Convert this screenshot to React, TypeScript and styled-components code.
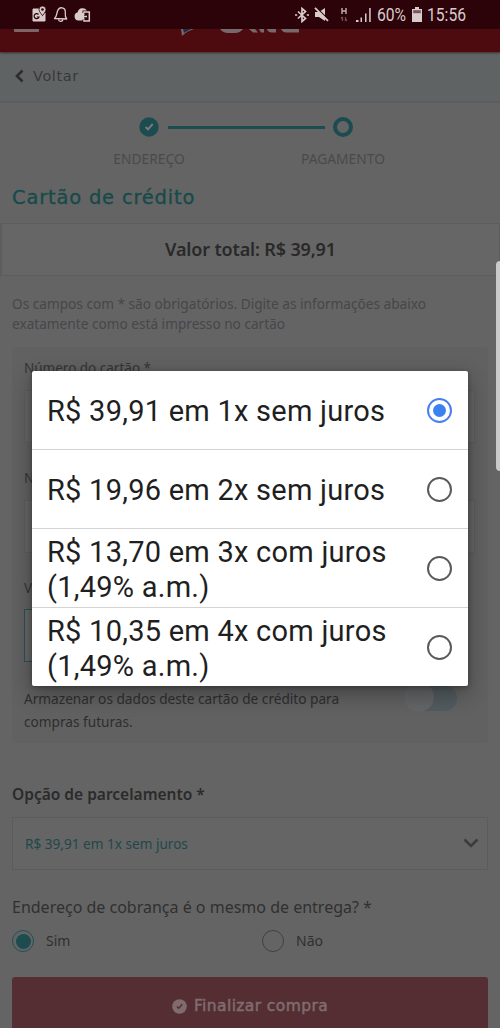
import React from 'react';
import styled, { createGlobalStyle, css } from 'styled-components';

const Global = createGlobalStyle`
  * { box-sizing: border-box; }
  body { margin: 0; background: #646464; font-family: 'Noto Sans', 'Open Sans', sans-serif; }
`;

const Screen = styled.div`
  position: relative; width: 500px; height: 1028px; overflow: hidden;
  background: #646464; display: flex; flex-direction: column;
`;
const StatusBar = styled.div`
  height: 29px; flex: none; background: #2c0308; color: #d9cbcc;
  display: flex; align-items: center; justify-content: space-between;
  padding: 0 33px 0 31px; font-family: Roboto, sans-serif;
`;
const StatusGroup = styled.div<{ $gap: number; $indent?: number }>`
  display: flex; align-items: center; gap: ${p => p.$gap}px; margin-left: ${p => p.$indent ?? 0}px;
`;
const StatusText = styled.span<{ $w: number }>`
  font-size: 18px; line-height: 29px; width: ${p => p.$w}px; white-space: nowrap;
  transform: scaleX(0.87); transform-origin: left;
`;
const Header = styled.header`
  height: 23px; flex: none; background: #4e0b0f; overflow: hidden;
  display: flex; align-items: flex-start; padding-left: 14px;
  box-shadow: 0 1px 2px #3d2b2d; position: relative;
`;
const MenuLine = styled.div`
  width: 25px; height: 3px; background: #7d6567; border-radius: 0 0 1px 1px; margin-right: 142px;
`;
const BackBar = styled.div`
  height: 51px; flex: none; background: #606364; border-bottom: 2px solid #5c5d5e;
  display: flex; align-items: center; padding: 0 0 2px 15px; gap: 9px; color: #2c2d2e;
`;
const BackText = styled.span`
  font: 14.5px 'DejaVu Sans', sans-serif; color: #37393a; letter-spacing: 0.6px;
`;
const Steps = styled.div`
  height: 84px; flex: none; display: flex; justify-content: center; padding: 14px 0 0 0;
  margin-left: -8px;
`;
const Step = styled.div`
  width: 90px; display: flex; flex-direction: column; align-items: center; gap: 12px;
  color: #4a4a4c; font-size: 13.8px; line-height: 20px;
`;
const StepLine = styled.div`
  width: 157px; height: 3px; background: #1c4c50; margin: 9px -27px 0 -26px;
`;
const Heading = styled.h1`
  margin: 0; height: 36px; padding: 0 0 0 12px; flex: none;
  font: 19.5px/21px 'DejaVu Sans', sans-serif; letter-spacing: 0.8px; color: #174a4a; white-space: nowrap;
  -webkit-text-stroke: 0.3px #174a4a;
`;
const Total = styled.div`
  height: 53px; flex: none; border: 1px solid #5c5c61; border-left-width: 2px; background: #666;
  display: flex; align-items: center; justify-content: center; padding-bottom: 2px;
  color: #292929; font-size: 18px; font-weight: 600; letter-spacing: -0.15px;
`;
const Notice = styled.p`
  margin: 0; padding: 18px 12px 0; height: 71px; flex: none; white-space: nowrap;
  font-size: 13.65px; line-height: 20px; color: #46474a;
`;
const Card = styled.section`
  margin: 0 12px; height: 396px; flex: none; padding: 11px 13px 0 12px; background: #616161;
  border-radius: 4px; display: flex; flex-direction: column;
`;
const Label = styled.label`
  font-size: 13.5px; line-height: 20px; color: #343436; height: 32px;
`;
const Field = styled.div<{ $active?: boolean }>`
  height: 53px; margin-bottom: ${p => (p.$active ? 24 : 25)}px; background: #656565;
  border: ${p => (p.$active ? '1px solid #285156' : '1px solid #5d5d5d')};
  ${p => p.$active && css`width: 218px; margin-top: -1px;`}
`;
const StoreRow = styled.div`
  display: flex; justify-content: space-between; align-items: flex-start; padding-right: 18px;
`;
const StoreText = styled.span`
  font-size: 13.65px; line-height: 23px; color: #2e2e2e; white-space: nowrap; margin-top: 1px;
`;
const Toggle = styled.div`
  width: 50px; height: 25px; border-radius: 13px; background: #525b60; display: flex;
`;
const Knob = styled.div`
  width: 30px; height: 30px; margin: -4px 0 0 -3px; border-radius: 50%; background: #646566;
`;
const SectionTitle = styled.h2`
  margin: 39px 12px 0; height: 35px; flex: none; font-size: 15.5px; line-height: 24px; font-weight: 600;
  color: #2b2b2b; white-space: nowrap;
`;
const Select = styled.div`
  margin: 0 12px; height: 53px; flex: none; border: 1px solid #5a5c5e; background: #656565;
  display: flex; align-items: center; justify-content: space-between; padding: 0 8px 0 12px;
  color: #20484c; font-size: 13.6px;
`;
const Question = styled.p`
  margin: 25px 12px 0; height: 35px; flex: none; font-size: 16px; line-height: 24px; color: #303030;
  white-space: nowrap;
`;
const Choices = styled.div`
  display: flex; height: 47px; flex: none; padding-left: 12px; align-items: flex-start;
`;
const Choice = styled.div`
  width: 250px; flex: none; display: flex; align-items: center; gap: 12px; color: #303030;
  font-size: 14px; line-height: 22px;
`;
const Radio = styled.span<{ $size: number; $color: string; $border: number; $dot?: number; $fill?: string }>`
  flex: none; width: ${p => p.$size}px; height: ${p => p.$size}px; border-radius: 50%;
  border: ${p => p.$border}px solid ${p => p.$color}; display: flex; align-items: center; justify-content: center;
  ${p => p.$dot && css`
    &::after { content: ''; width: ${p.$dot}px; height: ${p.$dot}px; border-radius: 50%; background: ${p.$fill}; }
  `}
`;
const Submit = styled.button`
  margin: 0 12px; height: 60px; flex: none; border: 0; border-radius: 3px; background: #542e33; color: #806c6e;
  display: flex; align-items: center; justify-content: center; gap: 7px; padding: 0 0 2px;
  font: 15.5px 'DejaVu Sans', sans-serif; letter-spacing: 0.4px; -webkit-text-stroke: 0.5px #806c6e;
`;
const Dialog = styled.div`
  position: absolute; left: 32px; top: 371px; width: 436px; height: 315px; border-radius: 2px;
  background: #fff; box-shadow: 0 8px 22px rgba(0,0,0,.32), 0 1px 5px rgba(0,0,0,.3); display: flex; flex-direction: column;
`;
const Option = styled.div`
  flex: 1; display: flex; align-items: center; justify-content: space-between; padding: 0 16px 0 15px;
  & + & { border-top: 1px solid #d4d4d4; }
`;
const OptionText = styled.span`
  font: 29px/34.5px Roboto, sans-serif; color: #1f1f1f; white-space: pre-line; letter-spacing: 0.25px; margin-top: 3px;
`;
const EdgeHandle = styled.div`
  position: absolute; left: 496px; top: 261px; width: 8px; height: 210px; border-radius: 4px; background: #cacaca;
`;

const MapsIcon = () => (
  <svg width="16" height="17" viewBox="0 0 16 17">
    <path d="M2 3h6.500c-.4 3 1.500 5 3.200 7.500L14 7v8H2z" fill="#d9cbcc" stroke="#d9cbcc" strokeWidth="1" strokeLinejoin="round" />
    <path d="M11.500 0a3.500 3.500 0 0 0-3.500 3.500c0 2.500 3.500 6 3.500 6s3.500-3.500 3.500-6A3.500 3.500 0 0 0 11.500 0z" fill="#d9cbcc" stroke="#2c0308" strokeWidth=".8" />
    <circle cx="11.500" cy="3.500" r="1.300" fill="#2c0308" />
    <path d="M7.500 8.500A2.500 2.500 0 1 0 8 11H5.800" fill="none" stroke="#2c0308" strokeWidth="1.200" />
  </svg>
);
const BellIcon = () => (
  <svg width="15" height="17" viewBox="0 0 15 17" fill="none" stroke="#d9cbcc" strokeWidth="1.300" strokeLinejoin="round">
    <path d="M1.500 12.500c2-1.500 2-3.500 2.700-6.500C5 3 6.500 1.500 9 1.800s3.500 2.200 3.300 4.700c-.3 3-.3 4.500 1.400 6.500z" />
    <path d="M5.500 13.300c.3 2.700 3.800 2.900 4.500.2" />
  </svg>
);
const CloudIcon = () => (
  <svg width="17" height="16" viewBox="0 0 17 16">
    <path d="M4.300 13.500A4.200 4.200 0 0 1 3.600 5.300a5 5 0 0 1 9.600-.8V13.500z" fill="#d9cbcc" />
    <path d="M10 6V5h5.500v9H10v-1.500" fill="#2c0308" stroke="#2c0308" strokeWidth="3" />
    <path d="M10 6.500V5h5.300v9H10v-1.500" fill="none" stroke="#d9cbcc" strokeWidth="1.500" />
    <path d="M13 9.500H8M10.300 7L8 9.500l2.300 2.500" fill="none" stroke="#d9cbcc" strokeWidth="1.300" />
  </svg>
);
const BluetoothIcon = () => (
  <svg width="14" height="16" viewBox="0 0 14 16" fill="none" stroke="#d9cbcc" strokeWidth="1.700">
    <path d="M3 4.500l7.500 7L7 14.500v-13l3.500 3L3 11.500" />
    <path d="M0 8h2.200M11.800 8H14" />
  </svg>
);
const MuteIcon = () => (
  <svg width="15" height="15" viewBox="0 0 15 15">
    <path d="M1 5h4l6-4v13l-6-4H1z" fill="#d9cbcc" />
    <path d="M2.500 .8l12 12" stroke="#2c0308" strokeWidth="1.500" />
    <path d="M1 .8l13 13" stroke="#d9cbcc" strokeWidth="1.800" />
  </svg>
);
const DataIcon = () => (
  <svg width="8" height="15" viewBox="0 0 8 15">
    <path d="M2 1v6M6 1v6M2 4h4" stroke="#bfaeb0" strokeWidth="1.400" fill="none" />
    <path d="M2.500 10v4M1 11.500l1.500-1.500M5.500 10v4M7 12.500L5.500 14" stroke="#6d5054" strokeWidth="1.200" fill="none" />
  </svg>
);
const SignalIcon = () => (
  <svg width="16" height="15" viewBox="0 0 16 15" fill="#d9cbcc">
    <path d="M0 13h2.500v2H0zM4.500 10.500H6V15H4.500zM9 6.500h1.500V15H9zM13.200 1h1.500v14h-1.500z" />
  </svg>
);
const BatteryIcon = () => (
  <svg width="10" height="15" viewBox="0 0 10 15">
    <path d="M3 0h4v2H3zM0 2h10v13H0z" fill="#d9cbcc" />
    <path d="M1.200 3.200h7.600v3H1.200z" fill="#77575b" />
  </svg>
);
const BrandMark = () => (
  <svg width="122" height="9" viewBox="0 0 122 9" fill="#77696b">
    <path d="M0 0h13Q6 2 1 7z" />
    <path d="M2 0h8L3 4z" fill="#252b47" />
    <path d="M39 0h23q-3 4-8 4h-7q-5 0-8-4z" />
    <path d="M68 0h6l3 3.500h-5zM78 0h5v3.500h-3zM86 0h9v3.500h-4q-4 0-5-3.500z" />
    <path d="M100 0h18v3.500h-13q-3 0-5-3.500z" />
  </svg>
);
const CheckBadge = ({ size, fill, mark }: { size: number; fill: string; mark: string }) => (
  <svg width={size} height={size} viewBox="0 0 20 20">
    <circle cx="10" cy="10" r="9.700" fill={fill} />
    <path d="M6.500 10l2.500 2.300L13.700 7" fill="none" stroke={mark} strokeWidth="2" />
  </svg>
);

const options = [
  'R$ 39,91 em 1x sem juros',
  'R$ 19,96 em 2x sem juros',
  'R$ 13,70 em 3x com juros\n(1,49% a.m.)',
  'R$ 10,35 em 4x com juros\n(1,49% a.m.)',
];

export default function App() {
  return (
    <Screen>
      <Global />
      <StatusBar>
        <StatusGroup $gap={6}><MapsIcon /><BellIcon /><CloudIcon /></StatusGroup>
        <StatusGroup $gap={5}>
          <BluetoothIcon /><MuteIcon />
          <StatusGroup $gap={8} $indent={6}><DataIcon /><SignalIcon /></StatusGroup>
          <StatusText $w={30}>60%</StatusText><BatteryIcon /><StatusText $w={40}>15:56</StatusText>
        </StatusGroup>
      </StatusBar>
      <Header>
        <MenuLine />
        <BrandMark />
      </Header>
      <BackBar>
        <svg width="9" height="14" viewBox="0 0 9 14" fill="none" stroke="currentColor" strokeWidth="2.600"><path d="M7.500 1.500L2 7l5.500 5.500" /></svg>
        <BackText>Voltar</BackText>
      </BackBar>
      <Steps>
        <Step><CheckBadge size={20} fill="#1c4c50" mark="#747b7c" />ENDEREÇO</Step>
        <StepLine />
        <Step><Radio $size={20} $border={4} $color="#1c4c50" />PAGAMENTO</Step>
      </Steps>
      <Heading>Cartão de crédito</Heading>
      <Total>Valor total: R$ 39,91</Total>
      <Notice>Os campos com * são obrigatórios. Digite as informações abaixo<br />exatamente como está impresso no cartão</Notice>
      <Card>
        <Label>Número do cartão *</Label><Field />
        <Label>N</Label><Field />
        <Label>V</Label><Field $active />
        <StoreRow>
          <StoreText>Armazenar os dados deste cartão de crédito para<br />compras futuras.</StoreText>
          <Toggle><Knob /></Toggle>
        </StoreRow>
      </Card>
      <SectionTitle>Opção de parcelamento *</SectionTitle>
      <Select>
        R$ 39,91 em 1x sem juros
        <svg width="16" height="11" viewBox="0 0 16 11" fill="none" stroke="#3c3c3c" strokeWidth="2.500"><path d="M1.500 1.500L8 8l6.500-6.500" /></svg>
      </Select>
      <Question>Endereço de cobrança é o mesmo de entrega? *</Question>
      <Choices>
        <Choice><Radio $size={22} $border={1} $color="#205156" $dot={15} $fill="#1c4c50" />Sim</Choice>
        <Choice><Radio $size={22} $border={1} $color="#414141" />Não</Choice>
      </Choices>
      <Submit><CheckBadge size={15} fill="#806c6e" mark="#542e33" />Finalizar compra</Submit>
      <Dialog>
        {options.map((text, i) => (
          <Option key={text}>
            <OptionText>{text}</OptionText>
            {i === 0
              ? <Radio $size={25} $border={2} $color="#4a7ef0" $dot={13} $fill="#3b82f0" />
              : <Radio $size={25} $border={2} $color="#5a5a5a" />}
          </Option>
        ))}
      </Dialog>
      <EdgeHandle />
    </Screen>
  );
}
